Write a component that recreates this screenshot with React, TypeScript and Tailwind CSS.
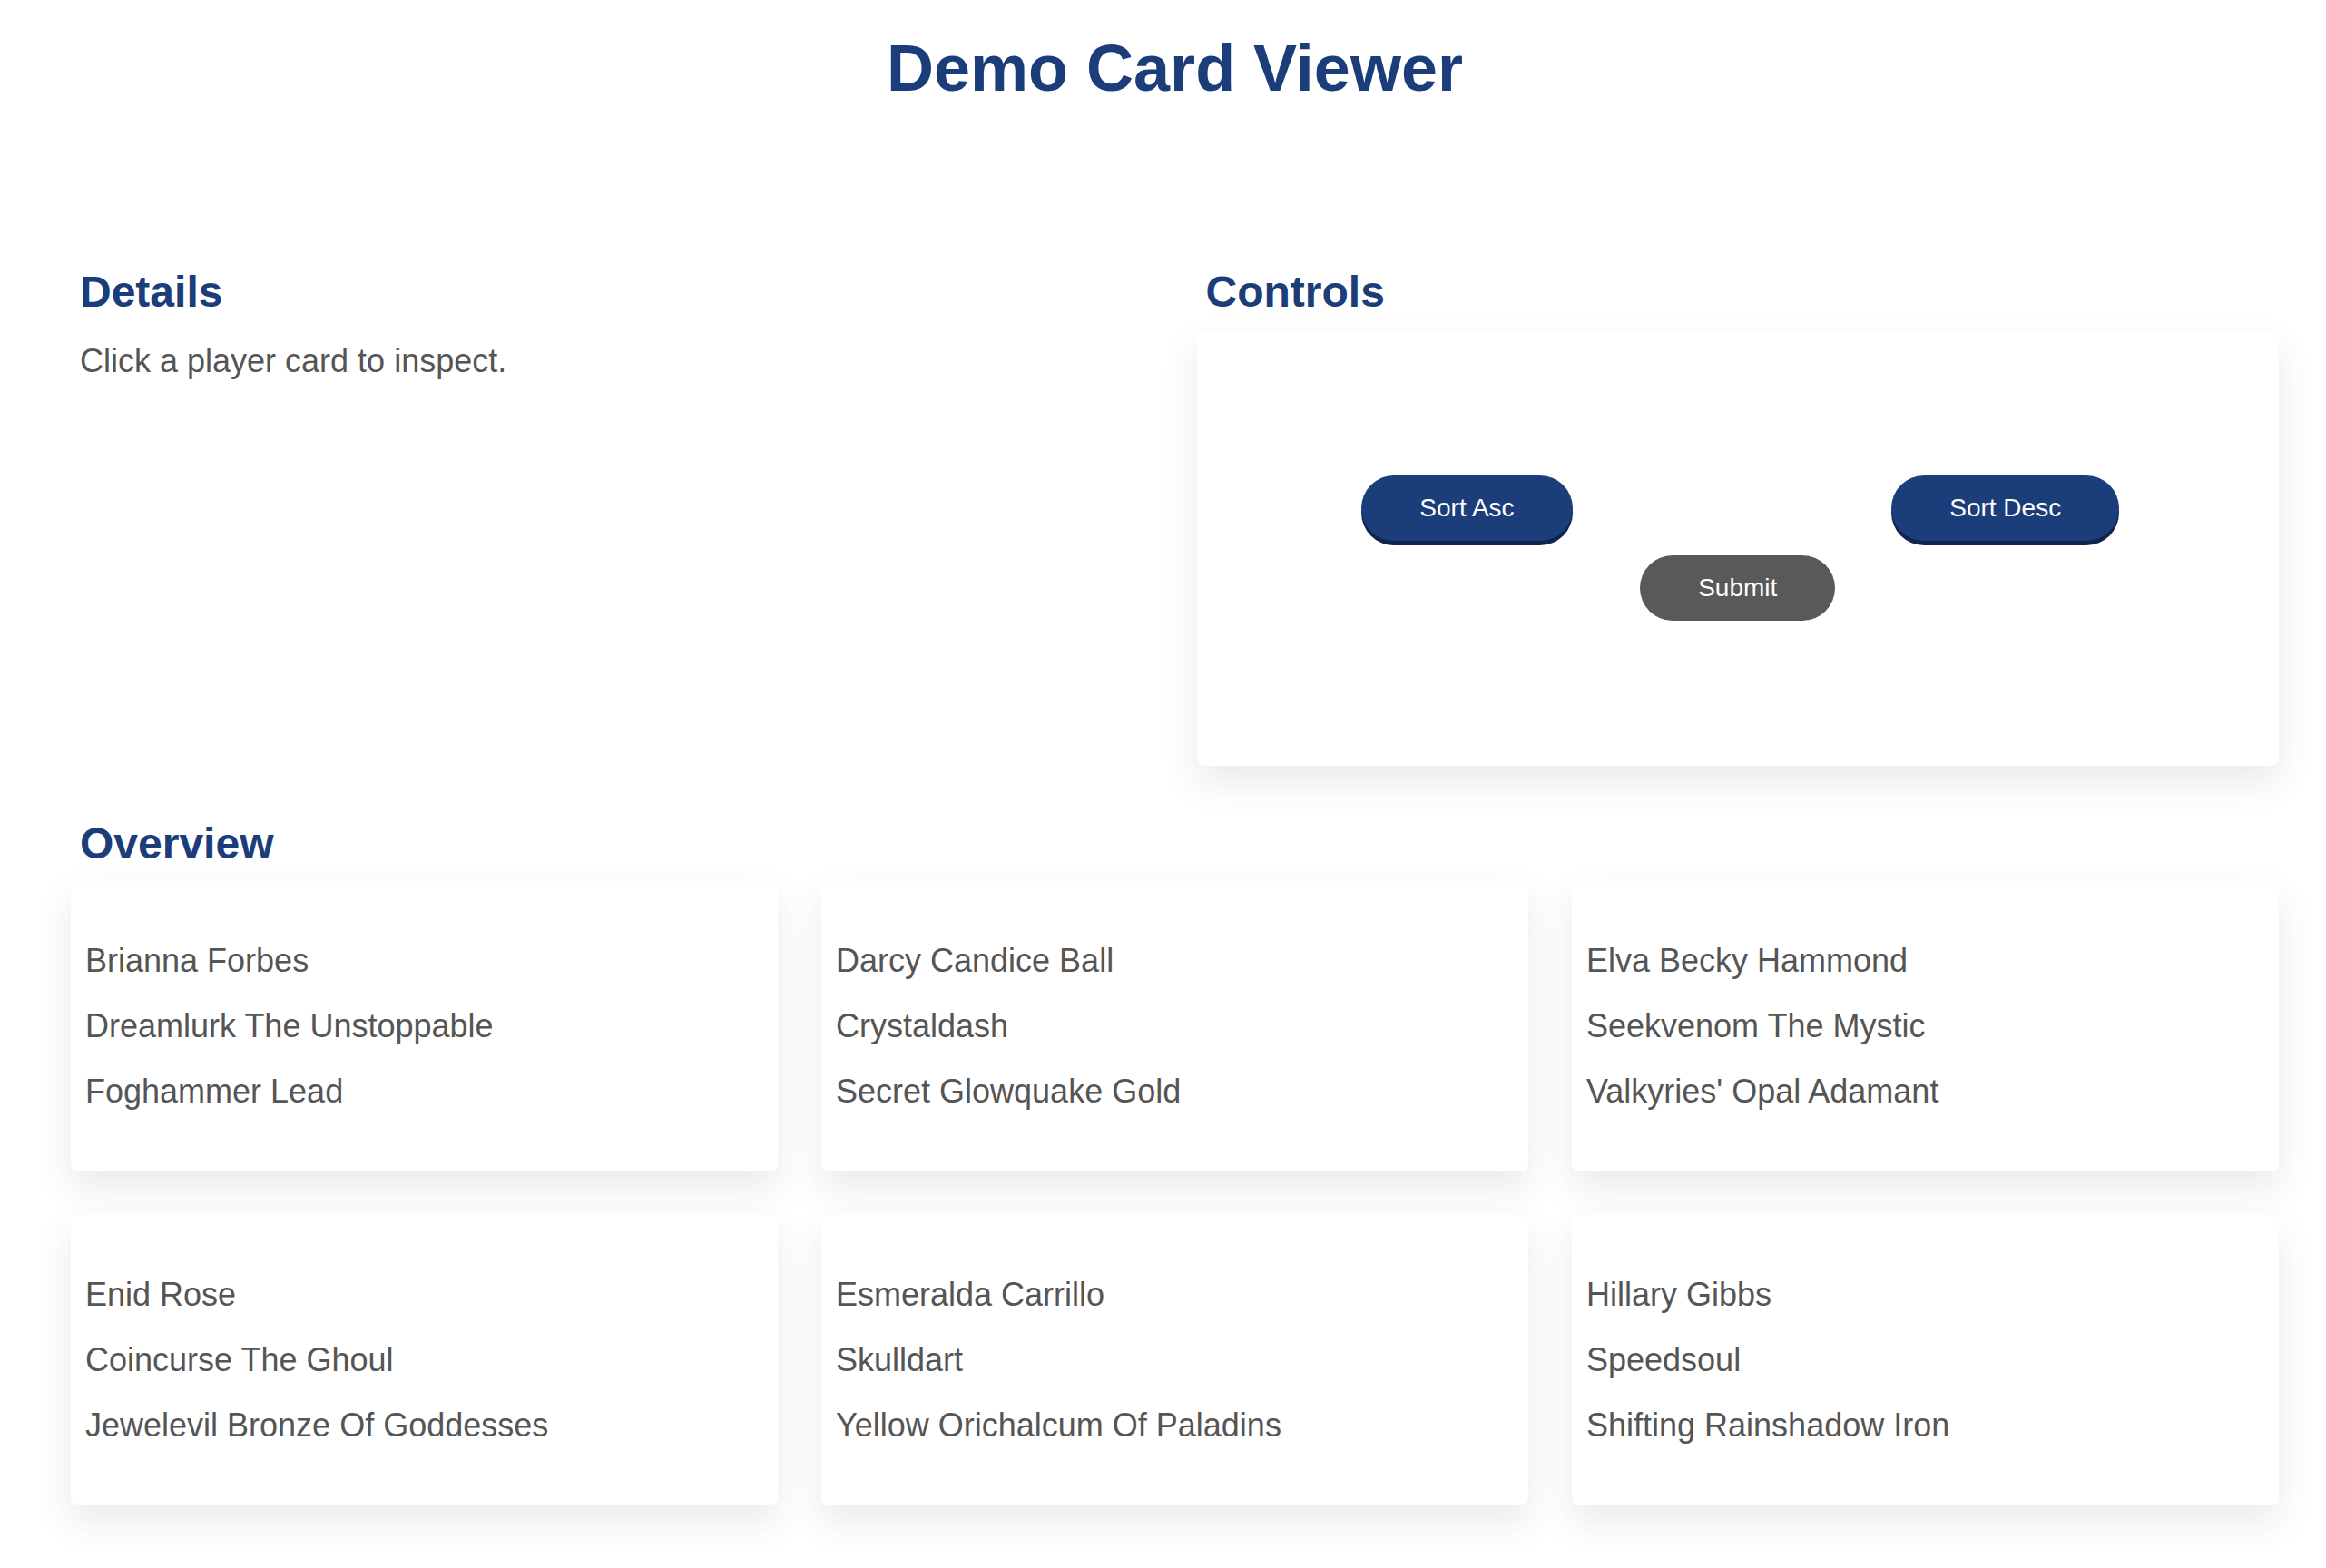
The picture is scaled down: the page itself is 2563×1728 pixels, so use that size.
import React from "react";

const cards: string[][] = [
  ["Brianna Forbes", "Dreamlurk The Unstoppable", "Foghammer Lead"],
  ["Darcy Candice Ball", "Crystaldash", "Secret Glowquake Gold"],
  ["Elva Becky Hammond", "Seekvenom The Mystic", "Valkyries' Opal Adamant"],
  ["Enid Rose", "Coincurse The Ghoul", "Jewelevil Bronze Of Goddesses"],
  ["Esmeralda Carrillo", "Skulldart", "Yellow Orichalcum Of Paladins"],
  ["Hillary Gibbs", "Speedsoul", "Shifting Rainshadow Iron"],
];

export default function App() {
  return (
    <div
      className="min-h-screen bg-white pl-[78px] pr-[52px] pt-[34px] pb-[60px]"
      style={{ fontFamily: '"Liberation Sans", Arial, sans-serif' }}
    >
      <h1 className="text-center text-[72px] font-bold leading-[1.15] text-[#1b3d7a]">
        Demo Card Viewer
      </h1>

      <div className="mt-[177px] grid grid-cols-2 gap-x-[48px]">
        <section>
          <h2 className="pl-[10px] text-[48px] font-bold leading-[1.15] text-[#1b3d7a]">
            Details
          </h2>
          <p className="mt-[28px] pl-[10px] text-[36px] leading-[1.15] text-[#555555]">
            Click a player card to inspect.
          </p>
        </section>
        <section>
          <h2 className="pl-[10px] text-[48px] font-bold leading-[1.15] text-[#1b3d7a]">
            Controls
          </h2>
          <div className="mt-[15px] flex h-[480px] flex-col justify-center rounded-[8px] bg-white shadow-[0_18px_40px_rgba(40,60,90,0.11)]">
            <div className="flex justify-around pl-[6px]">
              <button className="h-[72px] rounded-full bg-[#1b3d7a] px-[64px] text-[28px] leading-[32px] text-white shadow-[0_5px_0_#0f2550]">
                Sort Asc
              </button>
              <button className="h-[72px] rounded-full bg-[#1b3d7a] px-[64px] text-[28px] leading-[32px] text-white shadow-[0_5px_0_#0f2550]">
                Sort Desc
              </button>
            </div>
            <div className="mt-[16px] flex justify-center">
              <button className="h-[72px] rounded-full bg-[#595959] px-[64px] text-[28px] leading-[32px] text-white">
                Submit
              </button>
            </div>
          </div>
        </section>
      </div>

      <h2 className="mt-[58px] pl-[10px] text-[48px] font-bold leading-[1.15] text-[#1b3d7a]">
        Overview
      </h2>
      <div className="mt-[14px] grid grid-cols-3 gap-[48px]">
        {cards.map((c, i) => (
          <div
            key={i}
            className="h-[320px] rounded-[8px] bg-white px-[16px] py-[52px] shadow-[0_18px_40px_rgba(40,60,90,0.11)]"
          >
            {c.map((t) => (
              <div key={t} className="text-[36px] leading-[72px] text-[#555555]">
                {t}
              </div>
            ))}
          </div>
        ))}
      </div>
    </div>
  );
}
